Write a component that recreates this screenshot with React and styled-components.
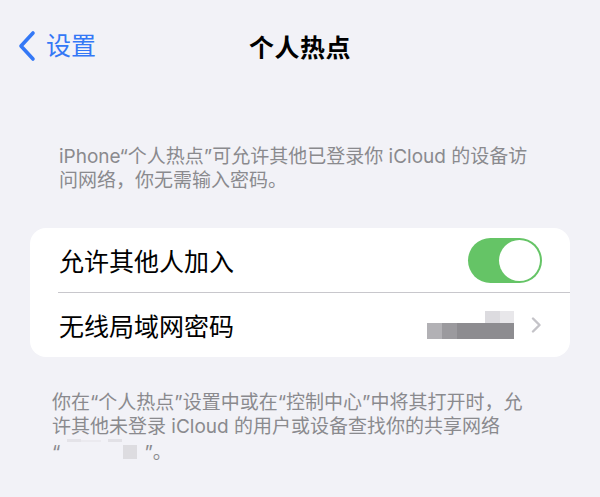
import React from 'react';
import styled, { createGlobalStyle } from 'styled-components';

const GlobalStyle = createGlobalStyle`
  html, body {
    margin: 0;
    padding: 0;
    background: #f2f2f7;
  }
  body {
    font-family: Inter, "Noto Sans CJK SC", sans-serif;
    -webkit-font-smoothing: antialiased;
  }
`;

const Page = styled.div`
  width: 600px;
  height: 497px;
  background: #f2f2f7;
  overflow: hidden;
`;

const NavBar = styled.div`
  position: relative;
  height: 92px;
  display: flex;
  align-items: center;
  justify-content: center;
`;

const BackButton = styled.div`
  position: absolute;
  left: 18px;
  top: 30px;
  display: flex;
  align-items: center;
  gap: 10px;
  color: #3478f6;
  font-size: 25px;
  line-height: 32px;
`;

const Title = styled.div`
  font-size: 25px;
  font-weight: 600;
  color: #000;
  letter-spacing: 0.5px;
`;

const Note = styled.p`
  margin: 0;
  padding-left: ${p => p.$inset}px;
  font-size: 19px;
  line-height: 24px;
  color: #8a8a8e;
`;

const Section = styled.div`
  padding-top: ${p => p.$top}px;
`;

const Card = styled.div`
  margin: 0 30px;
  background: #fff;
  border-radius: 16px;
  overflow: hidden;
`;

const Row = styled.div`
  height: 64px;
  display: flex;
  align-items: center;
  justify-content: space-between;
  padding: 0 28px 0 29px;
  box-sizing: border-box;
  font-size: 25px;
  color: #000;
`;

const Divider = styled.div`
  height: 1px;
  margin-left: 28px;
  background: #c8c7cc;
`;

const Switch = styled.div`
  width: 74px;
  height: 45px;
  border-radius: 23px;
  background: #65c466;
  display: flex;
  align-items: center;
  justify-content: flex-end;
  padding: 0 2px;
  box-sizing: border-box;
`;

const Knob = styled.div`
  width: 41px;
  height: 41px;
  border-radius: 50%;
  background: #fff;
`;

const Trailing = styled.div`
  display: flex;
  align-items: center;
  gap: 17px;
`;

const Masked = styled.span`
  display: inline-block;
  vertical-align: middle;
`;

function BackChevron() {
  return (
    <svg width="18" height="32" viewBox="0 0 18 32">
      <polyline points="15,3 3,16 15,29" fill="none" stroke="#3478f6"
        strokeWidth="3.6" strokeLinecap="round" strokeLinejoin="round" />
    </svg>
  );
}

function RowChevron() {
  return (
    <svg width="11" height="16" viewBox="0 0 11 16">
      <polyline points="2,1.5 8.5,8 2,14.5" fill="none" stroke="#c4c3c8"
        strokeWidth="2.4" strokeLinecap="round" strokeLinejoin="round" />
    </svg>
  );
}

function PasswordBlur() {
  return (
    <svg width="87" height="28" viewBox="0 0 87 28">
      <rect x="58" y="0" width="15" height="12" fill="#dcdbdf" />
      <rect x="73" y="0" width="14" height="12" fill="#e8e7ea" />
      <rect x="0" y="12" width="15" height="16" fill="#b2b1b5" />
      <rect x="15" y="12" width="15" height="16" fill="#9b9a9e" />
      <rect x="30" y="12" width="57" height="16" fill="#8d8c90" />
    </svg>
  );
}

function NameBlur() {
  return (
    <Masked>
      <svg width="84" height="24" viewBox="0 0 84 24">
        <rect x="7" y="0" width="14" height="3" fill="#e4e3e8" />
        <rect x="21" y="1" width="20" height="2" fill="#ebeaef" />
        <rect x="48" y="0" width="14" height="3" fill="#e2e1e6" />
        <rect x="63" y="6" width="14" height="14" fill="#dddce0" />
      </svg>
    </Masked>
  );
}

export default function App() {
  return (
    <Page>
      <GlobalStyle />
      <NavBar>
        <BackButton>
          <BackChevron />
          <span>设置</span>
        </BackButton>
        <Title>个人热点</Title>
      </NavBar>

      <Section $top={53}>
        <Note $inset={59}>
          iPhone“个人热点”可允许其他已登录你 iCloud 的设备访<br />
          问网络，你无需输入密码。
        </Note>
      </Section>

      <Section $top={35}>
        <Card>
          <Row>
            <span>允许其他人加入</span>
            <Switch><Knob /></Switch>
          </Row>
          <Divider />
          <Row>
            <span>无线局域网密码</span>
            <Trailing>
              <PasswordBlur />
              <RowChevron />
            </Trailing>
          </Row>
        </Card>
      </Section>

      <Section $top={34}>
        <Note $inset={52}>
          你在“个人热点”设置中或在“控制中心”中将其打开时，允<br />
          许其他未登录 iCloud 的用户或设备查找你的共享网络<br />
          “<NameBlur />”。
        </Note>
      </Section>
    </Page>
  );
}
